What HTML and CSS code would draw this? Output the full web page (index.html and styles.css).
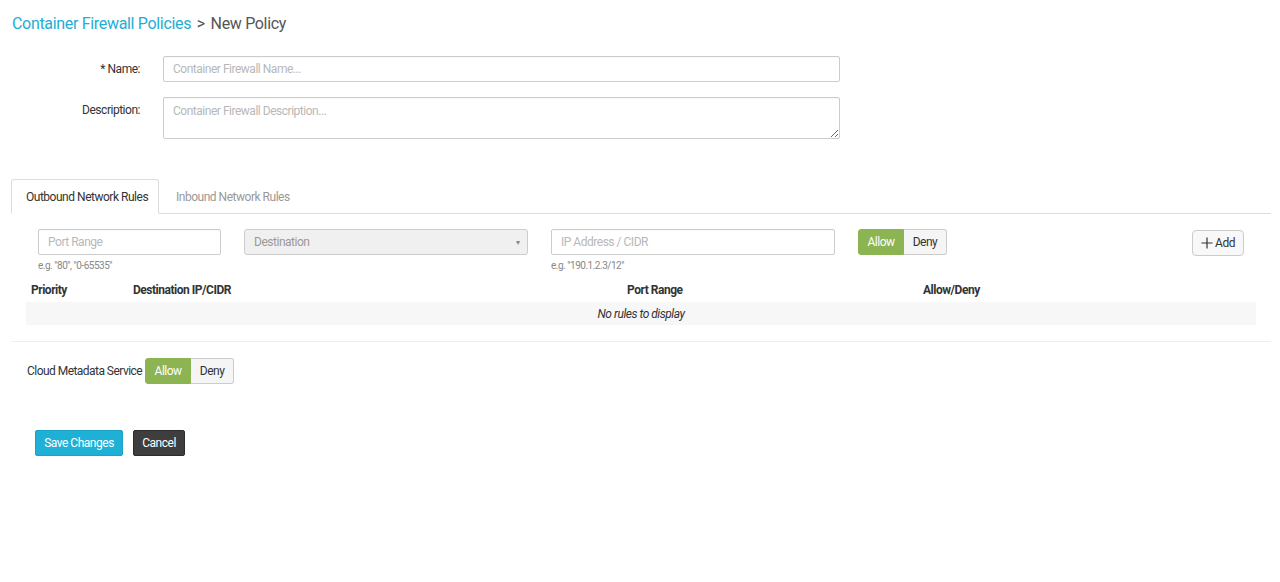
FILE: index.html
```html
<!DOCTYPE html>
<html>
<head>
<meta charset="utf-8">
<link rel="stylesheet" href="styles.css">
</head>
<body>
<div class="page">
  <h1 class="crumbs"><span class="crumb-link">Container Firewall Policies</span> <span class="crumb-sep">&gt;</span> <span class="crumb-current">New Policy</span></h1>

  <div class="form-grid">
    <label class="form-label">* Name:</label>
    <input class="text-input" type="text" placeholder="Container Firewall Name...">
    <label class="form-label desc-label">Description:</label>
    <textarea class="text-area" placeholder="Container Firewall Description..."></textarea>
  </div>

  <div class="tabs">
    <div class="tab active">Outbound Network Rules</div>
    <div class="tab">Inbound Network Rules</div>
  </div>

  <div class="tab-body">
    <div class="rule-row">
      <div class="field port-field">
        <input class="text-input" type="text" placeholder="Port Range">
        <div class="help">e.g. "80", "0-65535"</div>
      </div>
      <div class="field dest-field">
        <div class="select"><span>Destination</span><span class="caret">&#9662;</span></div>
      </div>
      <div class="field ip-field">
        <input class="text-input" type="text" placeholder="IP Address / CIDR">
        <div class="help">e.g. "190.1.2.3/12"</div>
      </div>
      <div class="toggle">
        <button class="tbtn on">Allow</button><button class="tbtn off">Deny</button>
      </div>
      <button class="add-btn"><svg width="12" height="12" viewBox="0 0 12 12"><path d="M6 0.5V11.5M0.5 6H11.5" stroke="#333" stroke-width="1.2" fill="none"/></svg>Add</button>
    </div>

    <table class="rules">
      <thead>
        <tr><th class="c1">Priority</th><th class="c2">Destination IP/CIDR</th><th class="c3">Port Range</th><th class="c4">Allow/Deny</th></tr>
      </thead>
      <tbody>
        <tr class="empty"><td colspan="4">No rules to display</td></tr>
      </tbody>
    </table>
  </div>

  <hr class="divider">

  <div class="cloud-row">
    <span class="cloud-label">Cloud Metadata Service</span>
    <div class="toggle">
      <button class="tbtn on">Allow</button><button class="tbtn off">Deny</button>
    </div>
  </div>

  <div class="actions">
    <button class="btn save">Save Changes</button>
    <button class="btn cancel">Cancel</button>
  </div>
</div>
</body>
</html>
```

FILE: styles.css
```css
* { box-sizing: border-box; }
html, body { margin: 0; padding: 0; background: #fff; }
body { font-family: Roboto, "Liberation Sans", sans-serif; font-size: 12px; color: #333; letter-spacing: -0.04em; }
input, textarea, button { letter-spacing: -0.04em; }

.page { padding: 14px 9px 0 11px; }

.crumbs { margin: 0 0 0 1px; font-size: 16px; font-weight: 400; line-height: 20px; letter-spacing: -0.02em; }
.crumb-link { color: #22aed4; }
.crumb-sep { color: #555; margin: 0 1px 0 2px; }
.crumb-current { color: #555; margin-left: 1px; }

.form-grid {
  display: grid;
  grid-template-columns: 129px 677px;
  column-gap: 23px;
  row-gap: 15px;
  margin-top: 22px;
}
.form-label { text-align: right; font-size: 12px; color: #333; line-height: 26px; }

.text-input, .text-area {
  font-family: Roboto, "Liberation Sans", sans-serif;
  font-size: 12px;
  border: 1px solid #ccc;
  border-radius: 2px;
  padding: 0 9px;
  color: #333;
  background: #fff;
  outline: none;
  box-shadow: inset 0 1px 1px rgba(0,0,0,0.03);
}
.text-input { height: 26px; width: 100%; }
.text-area { height: 42px; width: 100%; padding-top: 6px; resize: vertical; display: block; }
.text-input::placeholder, .text-area::placeholder { color: #b8b8b8; }

.tabs {
  display: flex;
  margin-top: 40px;
  border-bottom: 1px solid #ddd;
  height: 35px;
}
.tab {
  height: 35px;
  padding: 0 14px;
  line-height: 34px;
  font-size: 12px;
  color: #999;
  border: 1px solid transparent;
  border-radius: 3px 3px 0 0;
  white-space: nowrap;
}
.tab.active {
  color: #333;
  border-color: #ddd;
  border-bottom-color: #fff;
  background: #fff;
  width: 148px;
}
.tab + .tab { margin-left: 2px; }

.tab-body { padding: 15px 15px 0 15px; }

.rule-row { display: flex; align-items: flex-start; padding: 0 0 0 12px; }
.field { display: flex; flex-direction: column; }
.port-field { width: 183px; }
.dest-field { width: 284px; margin-left: 23px; }
.ip-field { width: 284px; margin-left: 23px; }
.help { font-size: 10px; color: #888; margin-top: 5px; }

.select {
  height: 26px;
  border: 1px solid #ccc;
  border-radius: 3px;
  background: #f0f0f0;
  color: #999;
  display: flex;
  align-items: center;
  justify-content: space-between;
  padding: 0 7px 0 9px;
}
.caret { font-size: 8px; color: #888; }

.toggle { display: flex; margin-left: 23px; }
.tbtn {
  font-family: Roboto, "Liberation Sans", sans-serif;
  font-size: 12px;
  height: 26px;
  border: 1px solid #ccc;
  background: #f5f5f5;
  color: #333;
  padding: 0;
  margin: 0;
  cursor: pointer;
}
.tbtn.on { background: #8cb452; border-color: #8cb452; color: #fff; width: 46px; border-radius: 3px 0 0 3px; }
.tbtn.off { width: 43px; border-left: none; border-radius: 0 3px 3px 0; }

.add-btn {
  margin-left: auto;
  margin-right: 12px;
  margin-top: 1px;
  height: 26px;
  width: 52px;
  border: 1px solid #ccc;
  border-radius: 4px;
  background: #f8f8f8;
  font-family: Roboto, "Liberation Sans", sans-serif;
  font-size: 12px;
  color: #333;
  display: flex;
  align-items: center;
  justify-content: center;
  gap: 2px;
  padding: 0;
}

.rules { width: 100%; border-collapse: collapse; margin-top: 8px; table-layout: fixed; }
.rules th { font-weight: 700; font-size: 12px; text-align: left; padding: 0 5px; height: 23px; line-height: 23px; color: #333; }
.rules th.c1 { width: 102px; }
.rules th.c2 { width: 494px; }
.rules th.c3 { width: 296px; }
.rules .empty td { background: #f7f7f7; text-align: center; font-style: italic; height: 23px; color: #333; }

.divider { border: none; border-top: 1px solid #eee; margin: 16px 0 0 0; }

.cloud-row { display: flex; align-items: center; margin-top: 16px; padding-left: 16px; }
.cloud-label { font-size: 12px; color: #333; letter-spacing: -0.045em; }
.cloud-row .toggle { margin-left: 3px; }

.actions { margin-top: 46px; padding-left: 24px; display: flex; gap: 10px; }
.btn {
  font-family: Roboto, "Liberation Sans", sans-serif;
  font-size: 12px;
  height: 26px;
  border-radius: 2px;
  border: 1px solid transparent;
  color: #fff;
  padding: 0;
  white-space: nowrap;
}
.btn.save { background: #1fb0d6; border-color: #1aa3c6; width: 88px; }
.btn.cancel { background: #3e3e3e; border-color: #2c2c2c; width: 52px; }
```
